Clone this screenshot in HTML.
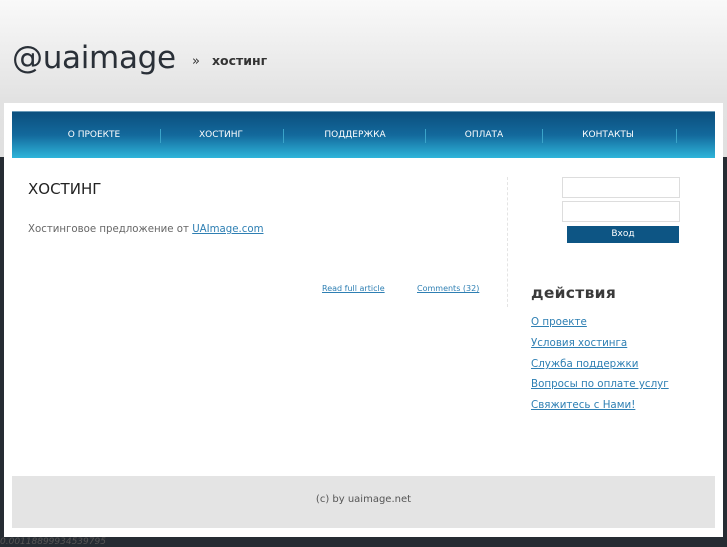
<!DOCTYPE html>
<html><head><meta charset="utf-8"><style>
*{margin:0;padding:0;box-sizing:border-box}
body{width:727px;height:545px;overflow:hidden;background:#262c33;font-family:"DejaVu Sans","Liberation Sans",sans-serif;position:relative}
.hdr{position:absolute;left:0;top:0;width:727px;height:157px;background:linear-gradient(#f9f9f9,#e2e2e2 100px,#e0e0e0)}
.logo{position:absolute;left:12px;top:40px;font-size:31px;color:#2a3038;letter-spacing:-0.3px}
.crumb{position:absolute;left:192px;top:53px;font-size:13px;color:#333}
.crumb b{margin-left:12px;font-size:12.5px}
.box{position:absolute;left:4px;top:103px;width:719px;height:434px;background:#fff}
.nav{position:absolute;left:12px;top:111px;width:703px;height:47px;background:linear-gradient(#0b4f7e,#13699c 50%,#2eb5da);border-top:1px solid #6a9ab8}
.nav span{position:absolute;top:18px;font-size:9px;color:#fff;transform:translateX(-50%)}
.nav i{position:absolute;top:17px;width:1px;height:14px;background:#3aa4c9}
h1{position:absolute;left:28px;top:180px;font-size:15px;font-weight:normal;color:#222}
.p{position:absolute;left:28px;top:224px;font-size:10.2px;color:#666}
a{color:#2e7fb3;text-decoration:underline}
.sm{position:absolute;top:284px;font-size:8px}
.vl{position:absolute;left:507px;top:177px;height:130px;border-left:1px dashed #e4e4e4}
.in{position:absolute;left:562px;width:118px;height:21px;border:1px solid #ddd}
.btn{position:absolute;left:567px;top:226px;width:112px;height:17px;background:#0d5584;color:#fff;font-size:9px;text-align:center;line-height:17px}
h2{position:absolute;left:531px;top:284px;font-size:15.5px;font-weight:bold;color:#3a3a3a;letter-spacing:.3px}
.lk{position:absolute;left:531px;font-size:10.3px}
.ft{position:absolute;left:12px;top:476px;width:703px;height:52px;background:#e4e4e4;font-size:10px;color:#555;text-align:center;line-height:48px}
.num{position:absolute;left:0;top:537px;font-size:9px;color:#555;font-style:italic}
</style></head><body>
<div class="hdr"></div>
<div class="logo">@uaimage</div>
<div class="crumb">»<b>хостинг</b></div>
<div class="box"></div>
<div class="nav">
<span style="left:82px">О ПРОЕКТЕ</span><i style="left:148px"></i>
<span style="left:209px">ХОСТИНГ</span><i style="left:271px"></i>
<span style="left:343px">ПОДДЕРЖКА</span><i style="left:413px"></i>
<span style="left:472px">ОПЛАТА</span><i style="left:530px"></i>
<span style="left:596px">КОНТАКТЫ</span><i style="left:664px"></i>
</div>
<h1>ХОСТИНГ</h1>
<div class="p">Хостинговое предложение от <a>UAImage.com</a></div>
<a class="sm" style="left:322px">Read full article</a>
<a class="sm" style="left:417px">Comments (32)</a>
<div class="vl"></div>
<div class="in" style="top:177px"></div>
<div class="in" style="top:201px"></div>
<div class="btn">Вход</div>
<h2>действия</h2>
<a class="lk" style="top:316px">О проекте</a>
<a class="lk" style="top:337px">Условия хостинга</a>
<a class="lk" style="top:358px">Служба поддержки</a>
<a class="lk" style="top:378px">Вопросы по оплате услуг</a>
<a class="lk" style="top:399px">Свяжитесь с Нами!</a>
<div class="ft">(c) by uaimage.net</div>
<div class="num">0.00118899934539795</div>
</body></html>
